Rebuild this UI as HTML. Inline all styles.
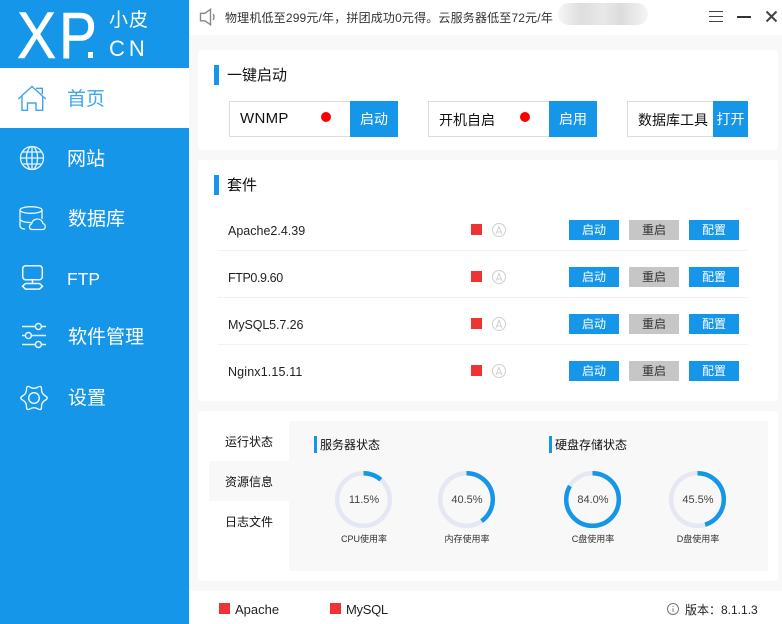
<!DOCTYPE html>
<html lang="zh"><head><meta charset="utf-8"><title>小皮</title>
<style>
*{box-sizing:border-box;margin:0;padding:0}
html,body{width:782px;height:624px;overflow:hidden;background:#f8f8f8}
body{position:relative;font-family:"Liberation Sans","Noto Sans CJK SC",sans-serif;color:#222}
.a{position:absolute;white-space:nowrap}
.blue{background:#1596e9}
.card{position:absolute;background:#fff;left:198px;width:580px;border-radius:3px}
.nav{position:absolute;left:67px;font-size:19px;line-height:24px;color:#fff}
.btn{position:absolute;width:50px;height:20px;background:#1596e9;color:#fff;font-size:12px;line-height:20px;text-align:center}
.btn.g{background:#c6c6c6;color:#333}
.bar{position:absolute;background:#1596e9}
.sq{position:absolute;width:11px;height:11px;background:#ee3333}
.box{position:absolute;top:101px;height:36px;background:#fff;border:1px solid #dcdcdc}
.go{position:absolute;top:101px;height:36px;background:#1596e9;color:#fff;font-size:14px;line-height:37px;text-align:center}
.dot{position:absolute;top:112px;width:10px;height:10px;border-radius:50%;background:#f00}
.t{position:absolute;font-size:14px;line-height:20px;white-space:nowrap;color:#111}
.row{position:absolute;left:228px;font-size:12.5px;line-height:18px;color:#222}
.line{position:absolute;left:218px;width:530px;height:1px;background:#f2f2f2}
.ctr{position:absolute;text-align:center;white-space:nowrap}
svg{position:absolute;overflow:visible}
</style></head><body>

<div class="a blue" style="left:0;top:0;width:189px;height:624px"></div>
<div class="a" style="left:0;top:68px;width:189px;height:60px;background:#fff"></div>
<div class="a" style="left:17px;top:0;font-size:66px;line-height:70px;color:#fff;-webkit-text-stroke:.6px #fff;transform:scaleX(.89);transform-origin:0 0">X</div>
<div class="a" style="left:59px;top:0;font-size:66px;line-height:70px;color:#fff;-webkit-text-stroke:.6px #fff;transform:scaleX(.86);transform-origin:0 0">P</div>
<div class="a" style="left:88px;top:52px;width:5px;height:6px;background:#fff"></div>
<div class="a" style="left:109px;top:9px;font-size:19px;line-height:24px;color:#fff;letter-spacing:1px">小皮</div>
<div class="a" style="left:109px;top:36px;font-size:22px;line-height:26px;color:#fff;letter-spacing:4px">CN</div>

<svg style="left:0;top:0" width="189" height="624" fill="none">
 <g stroke="#3fa6ec" stroke-width="1.400">
  <path d="M18.300 99 32 86.500 45.700 99"/>
  <path d="M22 96v14.300h5.500V103H36v7.300h6.700V96"/>
  <path d="M36 88.300h6.300v6"/>
 </g>
 <g stroke="#e8f5fd" stroke-width="1.300">
  <circle cx="32" cy="158" r="11.500"/>
  <ellipse cx="32" cy="158" rx="5.500" ry="11.500"/>
  <path d="M32 146.500v23M20.500 158h23M22 152h20M22 164h20"/>
 </g>
 <g stroke="#eef7fd" stroke-width="1.300">
  <ellipse cx="31" cy="210" rx="11" ry="3.300"/>
  <path d="M20 210v16c0 1.800 2 2.800 5 3.200M42 210v9M20 219c1 2.500 6 3.500 11 3.500"/>
  <path d="M33 229.500h-1c-3 0-3.500-4.500-.5-5.500 .5-3.500 3.500-5 6-5s5 1.800 5.500 4.500c3 .8 3 6-.3 6z"/>
 </g>
 <g stroke="#f4fafe" stroke-width="1.500">
  <rect x="22.700" y="265.700" width="19.600" height="14" rx="3"/>
  <path d="M32.500 279.700v3.800"/>
  <path d="M25.500 283.500h14l3 2.800-3 2.800h-14l-3-2.800z"/>
 </g>
 <g stroke="#e8f5fd" stroke-width="1.500">
  <path d="M22 326.500h13.300M41.500 326.500H46M22 335.500h3.300M31.500 335.500H46M22 344.500h13.300M41.500 344.500H46"/>
  <circle cx="38.400" cy="326.500" r="3"/>
  <circle cx="28.400" cy="335.500" r="3"/>
  <circle cx="38.400" cy="344.500" r="3"/>
 </g>
 <g stroke="#f4fafe" stroke-width="1.400">
  <circle cx="34" cy="398" r="5.300"/>
  <path transform="translate(34 398) scale(.95) translate(-34 -398)" d="M45.900 395.750Q41.790 393.500 41.900 388.820Q42 384.140 38 386.570Q34 389 30 386.570Q26 384.140 26.100 388.820Q26.210 393.500 22.100 395.750Q18 398 22.100 400.250Q26.210 402.500 26.100 407.180Q26 411.860 30 409.430Q34 407 38 409.430Q42 411.860 41.900 407.180Q41.790 402.500 45.900 400.250Q50 398 45.900 395.750Z"/>
 </g>
</svg>
<div class="nav" style="top:88px;color:#3fa6ec">首页</div>
<div class="nav" style="top:148px">网站</div>
<div class="nav" style="top:208px;left:68px">数据库</div>
<div class="nav" style="top:267px;font-size:17.5px">FTP</div>
<div class="nav" style="top:326px;left:68px">软件管理</div>
<div class="nav" style="top:387px;left:68px">设置</div>

<div class="a" style="left:189px;top:0;width:593px;height:35px;background:#fff"></div>
<svg style="left:190px;top:0" width="60" height="36" fill="none" stroke="#888" stroke-width="1.400">
 <path d="M10.500 13.300h4.500l5.500-4v15.500l-5.500-4h-4.500z"/><path d="M23.200 14c1 2 1 4 0 6"/>
</svg>
<div class="a" style="left:225px;top:9px;font-size:12px;line-height:18px;color:#333;letter-spacing:.17px">物理机低至299元/年，拼团成功0元得。云服务器低至72元/年</div>
<div class="a" style="left:558px;top:3px;width:90px;height:22px;border-radius:11px;background:linear-gradient(90deg,#f6f6f6,#dedede 25%,#e8e8e8 50%,#dcdcdc 70%,#f5f5f5)"></div>
<svg style="left:700px;top:0" width="82" height="36" fill="none">
 <path d="M9 11.500h14M9 16.500h14M9 21.500h14" stroke="#444" stroke-width="1"/>
 <path d="M37 17h14" stroke="#333" stroke-width="2"/>
 <path d="M66.500 11.500 76.500 21.500M76.500 11.500 66.500 21.500" stroke="#444" stroke-width="2"/>
</svg>

<div class="card" style="top:50px;height:100px"></div>
<div class="bar" style="left:214px;top:65px;width:5px;height:20px"></div>
<div class="t" style="left:227px;top:66px;font-size:15px">一键启动</div>
<div class="box" style="left:229px;width:122px"></div>
<div class="t" style="left:240px;top:109px;font-size:15px;letter-spacing:.3px">WNMP</div>
<div class="dot" style="left:321px"></div>
<div class="go" style="left:350px;width:48px">启动</div>
<div class="box" style="left:428px;width:122px"></div>
<div class="t" style="left:439px;top:110px;font-size:14px">开机自启</div>
<div class="dot" style="left:520px"></div>
<div class="go" style="left:549px;width:48px">启用</div>
<div class="box" style="left:627px;width:88px"></div>
<div class="t" style="left:638px;top:110px;font-size:14px">数据库工具</div>
<div class="go" style="left:713px;width:35px">打开</div>

<div class="card" style="top:160px;height:241px"></div>
<div class="bar" style="left:214px;top:175px;width:5px;height:20px"></div>
<div class="t" style="left:227px;top:176px;font-size:15px">套件</div>
<div class="row" style="top:222px">Apache2.4.39</div>
<div class="row" style="top:269px;letter-spacing:-.4px">FTP0.9.60</div>
<div class="row" style="top:316px;letter-spacing:-.1px">MySQL5.7.26</div>
<div class="row" style="top:363px;letter-spacing:.15px">Nginx1.15.11</div>
<div class="line" style="top:250px"></div><div class="line" style="top:297px"></div><div class="line" style="top:344px"></div>
<div class="sq" style="left:471px;top:224px"></div><div class="sq" style="left:471px;top:271px"></div><div class="sq" style="left:471px;top:318px"></div><div class="sq" style="left:471px;top:365px"></div>
<svg style="left:0;top:0" width="782" height="624" fill="none" stroke="#cfcfcf" stroke-width="1">
 <circle cx="499" cy="230" r="6.500"/><path d="M496 234l3-7.500 3 7.500M497 232h4"/>
 <circle cx="499" cy="277" r="6.500"/><path d="M496 281l3-7.500 3 7.500M497 279h4"/>
 <circle cx="499" cy="324" r="6.500"/><path d="M496 328l3-7.500 3 7.500M497 326h4"/>
 <circle cx="499" cy="371" r="6.500"/><path d="M496 375l3-7.500 3 7.500M497 373h4"/>
</svg>
<div class="btn" style="left:569px;top:220px">启动</div><div class="btn g" style="left:629px;top:220px">重启</div><div class="btn" style="left:689px;top:220px">配置</div>
<div class="btn" style="left:569px;top:267px">启动</div><div class="btn g" style="left:629px;top:267px">重启</div><div class="btn" style="left:689px;top:267px">配置</div>
<div class="btn" style="left:569px;top:314px">启动</div><div class="btn g" style="left:629px;top:314px">重启</div><div class="btn" style="left:689px;top:314px">配置</div>
<div class="btn" style="left:569px;top:361px">启动</div><div class="btn g" style="left:629px;top:361px">重启</div><div class="btn" style="left:689px;top:361px">配置</div>

<div class="card" style="top:411px;height:170px"></div>
<div class="a" style="left:209px;top:461px;width:80px;height:40px;background:#f8f8f8"></div>
<div class="a" style="left:289px;top:421px;width:479px;height:150px;background:#f8f8f8"></div>
<div class="t" style="left:225px;top:432px;font-size:12px">运行状态</div>
<div class="t" style="left:225px;top:472px;font-size:12px">资源信息</div>
<div class="t" style="left:225px;top:512px;font-size:12px">日志文件</div>

<div class="bar" style="left:314px;top:436px;width:3px;height:17px"></div>
<div class="t" style="left:320px;top:435px;font-size:12px">服务器状态</div>
<div class="bar" style="left:549px;top:436px;width:3px;height:17px"></div>
<div class="t" style="left:555px;top:435px;font-size:12px">硬盘存储状态</div>

<svg style="left:0;top:0" width="782" height="624" fill="none" stroke-width="4.500">
 <g stroke="#e5e7f2"><circle cx="363.500" cy="499.500" r="26.300"/><circle cx="466.500" cy="499.500" r="26.300"/><circle cx="592.500" cy="499.500" r="26.300"/><circle cx="697.500" cy="499.500" r="26.300"/></g>
 <g stroke="#1596e9">
  <circle cx="363.500" cy="499.500" r="26.300" pathLength="100" stroke-dasharray="11.500 100" transform="rotate(-90 363.500 499.500)"/>
  <circle cx="466.500" cy="499.500" r="26.300" pathLength="100" stroke-dasharray="40.500 100" transform="rotate(-90 466.500 499.500)"/>
  <circle cx="592.500" cy="499.500" r="26.300" pathLength="100" stroke-dasharray="84 100" transform="rotate(-90 592.500 499.500)"/>
  <circle cx="697.500" cy="499.500" r="26.300" pathLength="100" stroke-dasharray="45.500 100" transform="rotate(-90 697.500 499.500)"/>
 </g>
</svg>
<div class="ctr" style="left:334px;width:60px;top:492px;font-size:11px;line-height:16px;color:#444">11.5%</div>
<div class="ctr" style="left:437px;width:60px;top:492px;font-size:11px;line-height:16px;color:#444">40.5%</div>
<div class="ctr" style="left:563px;width:60px;top:492px;font-size:11px;line-height:16px;color:#444">84.0%</div>
<div class="ctr" style="left:668px;width:60px;top:492px;font-size:11px;line-height:16px;color:#444">45.5%</div>
<div class="ctr" style="left:324px;width:80px;top:532px;font-size:9px;line-height:14px;color:#333">CPU使用率</div>
<div class="ctr" style="left:427px;width:80px;top:532px;font-size:9px;line-height:14px;color:#333">内存使用率</div>
<div class="ctr" style="left:553px;width:80px;top:532px;font-size:9px;line-height:14px;color:#333">C盘使用率</div>
<div class="ctr" style="left:658px;width:80px;top:532px;font-size:9px;line-height:14px;color:#333">D盘使用率</div>

<div class="a" style="left:189px;top:591px;width:593px;height:33px;background:#fff"></div>
<div class="sq" style="left:219px;top:603px"></div>
<div class="t" style="left:235px;top:600px;font-size:13px;color:#222">Apache</div>
<div class="sq" style="left:330px;top:603px"></div>
<div class="t" style="left:346px;top:600px;font-size:13px;color:#222;letter-spacing:-.3px">MySQL</div>
<svg style="left:667px;top:603px" width="13" height="13" fill="none" stroke="#777" stroke-width="1">
 <circle cx="6" cy="6" r="5.500"/><path d="M6 5.200v3.600M6 3v1"/>
</svg>
<div class="t" style="left:685px;top:600px;font-size:12px;color:#222">版本：8.1.1.3</div>
</body></html>
